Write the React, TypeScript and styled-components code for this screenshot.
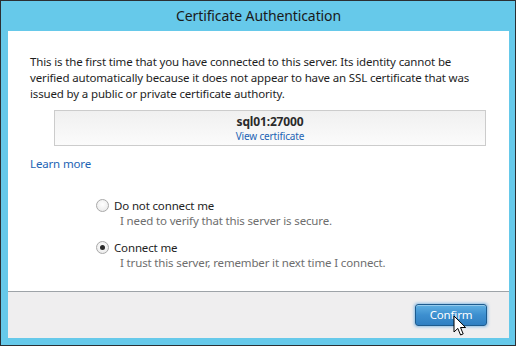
import styled, { createGlobalStyle } from "styled-components";

const GlobalStyle = createGlobalStyle`
	html, body {
		margin: 0;
		padding: 0;
		background: #ffffff;
	}
	body {
		font-family: "Noto Sans", "Open Sans", sans-serif;
		font-size: 11.5px;
		letter-spacing: -0.15px;
		color: #1e1e1e;
	}
`;

const OPTIONS = [
	{ label: "Do not connect me", hint: "I need to verify that this server is secure.", checked: false },
	{ label: "Connect me", hint: "I trust this server, remember it next time I connect.", checked: true },
];

const App: React.FC = () => {
	return (
		<>
			<GlobalStyle />
			<Window>
				<TitleBar>Certificate Authentication</TitleBar>
				<Panel>
					<Body>
						<Message>
							This is the first time that you have connected to this server. Its identity cannot be
							<br />
							verified automatically because it does not appear to have an SSL certificate that was
							<br />
							issued by a public or private certificate authority.
						</Message>
						<CertBox>
							<Server>sql01:27000</Server>
							<SmallLink>View certificate</SmallLink>
						</CertBox>
						<Link>Learn more</Link>
						<Options>
							{OPTIONS.map((opt) => (
								<Option key={opt.label}>
									<OptionRow>
										<Radio checked={opt.checked} />
										<OptionLabel>{opt.label}</OptionLabel>
									</OptionRow>
									<Hint>{opt.hint}</Hint>
								</Option>
							))}
						</Options>
					</Body>
					<Footer>
						<ButtonWrap>
							<ConfirmButton>Confirm</ConfirmButton>
							<Cursor width="14" height="22" viewBox="0 0 14 22">
								<path
									d="M1 1 L1 17 L4.8 13.4 L7.6 20 L10.2 18.9 L7.5 12.5 L12.6 12.5 Z"
									fill="#ffffff"
									stroke="#000000"
									strokeWidth="1"
									strokeLinejoin="miter"
								/>
							</Cursor>
						</ButtonWrap>
					</Footer>
				</Panel>
			</Window>
		</>
	);
};
export default App;

const Window = styled.div`
	width: 516px;
	height: 346px;
	box-sizing: border-box;
	border: 1px solid #2b2f33;
	background-color: #66c9ea;
	padding: 0 6px 7px 7px;
	display: flex;
	flex-direction: column;
`;
const TitleBar = styled.div`
	height: 30px;
	display: flex;
	align-items: center;
	justify-content: center;
	font-size: 14px;
	letter-spacing: -0.1px;
	color: #1a1a1a;
	padding-bottom: 1px;
	box-sizing: border-box;
`;
const Panel = styled.div`
	flex: 1;
	display: flex;
	flex-direction: column;
	background: #ffffff;
`;
const Body = styled.div`
	flex: 1;
	padding: 23px 22px 0 22px;
	border-bottom: 1px solid #9ea3a8;
`;
const Message = styled.div`
	line-height: 16px;
	white-space: nowrap;
`;
const CertBox = styled.div`
	margin: 8px 0 0 24px;
	width: 432px;
	height: 36px;
	box-sizing: border-box;
	border: 1px solid #cccccc;
	background: linear-gradient(180deg, #f0f0f0 0%, #fbfbfb 100%);
	display: flex;
	flex-direction: column;
	align-items: center;
	padding-top: 3px;
`;
const Server = styled.div`
	font-weight: bold;
	font-size: 12px;
	line-height: 15px;
	color: #2a2a2a;
`;
const SmallLink = styled.div`
	margin-top: 1px;
	font-size: 10px;
	line-height: 12px;
	color: #1d64b4;
`;
const Link = styled.div`
	margin-top: 10px;
	color: #1d64b4;
	line-height: 16px;
`;
const Options = styled.div`
	margin: 25px 0 0 66px;
	display: flex;
	flex-direction: column;
	gap: 10px;
`;
const Option = styled.div`
	display: flex;
	flex-direction: column;
`;
const OptionRow = styled.div`
	display: flex;
	align-items: center;
	gap: 5px;
	height: 16px;
`;
const Radio = styled.span<{ checked?: boolean }>`
	width: 13px;
	height: 13px;
	box-sizing: border-box;
	border-radius: 50%;
	border: 1px solid #a9a9a9;
	background: radial-gradient(circle at 50% 40%, #ffffff 0%, #e6e6e6 100%);
	position: relative;
	&::after {
		content: "";
		display: ${(p) => (p.checked ? "block" : "none")};
		position: absolute;
		left: 3px;
		top: 3px;
		width: 5px;
		height: 5px;
		border-radius: 50%;
		background: #2a2a2a;
	}
`;
const OptionLabel = styled.span`
	color: #1e1e1e;
`;
const Hint = styled.div`
	padding-left: 24px;
	color: #6e6e6e;
	line-height: 16px;
`;
const Footer = styled.div`
	height: 46px;
	background: #efeeef;
	display: flex;
	align-items: center;
	justify-content: flex-end;
	padding-right: 22px;
`;
const ButtonWrap = styled.div`
	position: relative;
`;
const ConfirmButton = styled.button`
	width: 72px;
	height: 22px;
	box-sizing: border-box;
	border: 1px solid #1d5b8e;
	border-radius: 3px;
	background: linear-gradient(180deg, #5fb0e3 0%, #3d8fcf 50%, #2f7fc2 100%);
	box-shadow: 0 0 3px 1px rgba(60, 150, 220, 0.55), inset 0 1px 0 rgba(255, 255, 255, 0.35);
	color: #ffffff;
	font-family: "Noto Sans", "Open Sans", sans-serif;
	font-size: 11.5px;
	letter-spacing: -0.15px;
	padding: 0;
	line-height: 18px;
`;
const Cursor = styled.svg`
	position: absolute;
	left: 38px;
	top: 11px;
	pointer-events: none;
`;
